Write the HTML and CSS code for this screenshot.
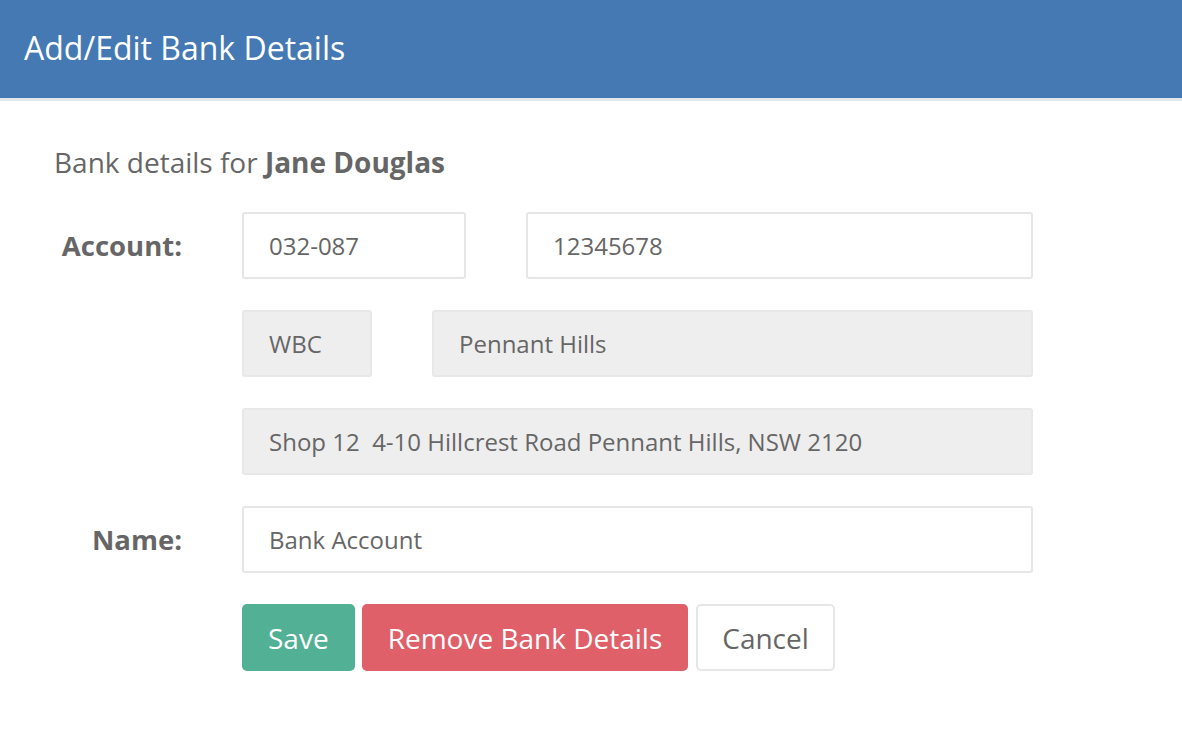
FILE: index.html
```html
<!DOCTYPE html>
<html lang="en">
<head>
    <meta charset="UTF-8">
    <meta name="viewport" content="width=device-width, initial-scale=1.0">
    <title>Add/Edit Bank Details</title>
    <link rel="stylesheet" href="styles.css">
</head>
<body>
    <div class="modal-header">
        <h2>Add/Edit Bank Details</h2>
    </div>

    <div class="modal-body">
        <p class="intro">Bank details for <strong>Jane Douglas</strong></p>

        <form class="bank-form">
            <label class="label">Account:</label>
            <div class="field-row">
                <input class="input bsb" type="text" value="032-087">
                <input class="input grow" type="text" value="12345678">
            </div>

            <span></span>
            <div class="field-row">
                <input class="input bank-code" type="text" value="WBC" readonly>
                <input class="input grow" type="text" value="Pennant Hills" readonly>
            </div>

            <span></span>
            <div class="field-row">
                <input class="input grow" type="text" value="Shop 12  4-10 Hillcrest Road Pennant Hills, NSW 2120" readonly>
            </div>

            <label class="label">Name:</label>
            <div class="field-row">
                <input class="input grow" type="text" value="Bank Account">
            </div>

            <span></span>
            <div class="buttons">
                <button type="submit" class="btn btn-save">Save</button>
                <button type="button" class="btn btn-remove">Remove Bank Details</button>
                <button type="button" class="btn btn-cancel">Cancel</button>
            </div>
        </form>
    </div>
</body>
</html>
```

FILE: styles.css
```css
/* General Styling */
body {
    font-family: "Open Sans", Arial, sans-serif;
    margin: 0;
    padding: 0;
    background-color: #fff;
    color: #666;
}

/* Header */
.modal-header {
    height: 98px;
    background-color: #4479b3;
    border-bottom: 3px solid #e3e6ea;
    display: flex;
    align-items: center;
    padding: 0 24px;
}

.modal-header h2 {
    margin: 0;
    color: #fff;
    font-size: 32px;
    font-weight: 400;
    padding-bottom: 4px;
}

/* Body */
.modal-body {
    padding: 42px 0 0 54px;
}

.intro {
    margin: 0 0 31px;
    font-size: 28px;
    line-height: 38px;
}

.intro strong {
    font-weight: 700;
}

/* Form grid */
.bank-form {
    display: grid;
    grid-template-columns: 128px 791px;
    grid-auto-rows: 67px;
    column-gap: 60px;
    row-gap: 31px;
    align-items: center;
}

.label {
    text-align: right;
    font-size: 27.5px;
    font-weight: 700;
    color: #666;
}

.field-row {
    display: flex;
    gap: 60px;
    height: 100%;
}

.input {
    box-sizing: border-box;
    height: 67px;
    padding: 0 25px;
    font-family: inherit;
    font-size: 24px;
    color: #666;
    background: #fff;
    border: 2px solid #e6e6e6;
    border-radius: 3px;
    outline: none;
    min-width: 0;
}

.input[readonly] {
    background-color: #eee;
    border-color: #e8e8e8;
}

.bsb {
    width: 224px;
}

.bank-code {
    width: 130px;
}

.grow {
    flex: 1;
}

/* Buttons */
.buttons {
    display: flex;
    gap: 7px;
    height: 100%;
}

.btn {
    height: 67px;
    padding: 0 24px;
    font-family: inherit;
    font-size: 28px;
    border-radius: 5px;
    border: 2px solid transparent;
    cursor: pointer;
}

.btn-save {
    background-color: #52b095;
    color: #fff;
}

.btn-remove {
    background-color: #e0606a;
    color: #fff;
}

.btn-cancel {
    background-color: #fff;
    color: #666;
    border-color: #e6e6e6;
    margin-left: 1px;
}
```
